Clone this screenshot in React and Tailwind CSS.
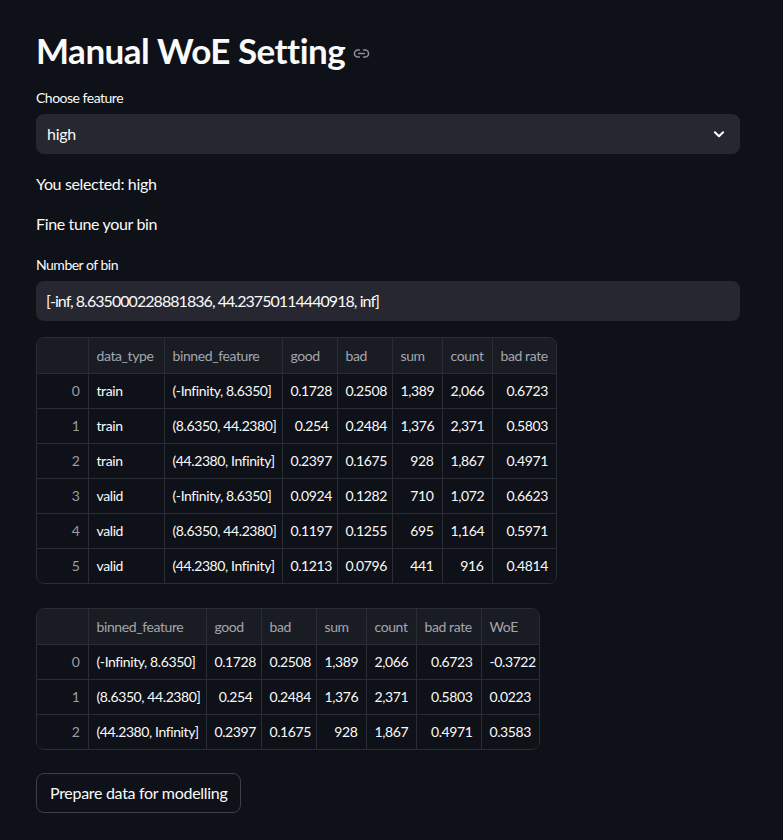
import React from "react";

const font = { fontFamily: "Lato, 'Noto Sans', sans-serif" };

const t1cols = [
  { h: "", w: 51 },
  { h: "data_type", w: 76, left: true },
  { h: "binned_feature", w: 118, left: true },
  { h: "good", w: 55 },
  { h: "bad", w: 55 },
  { h: "sum", w: 50 },
  { h: "count", w: 50 },
  { h: "bad rate", w: 64 },
];
const t1rows = [
  ["0", "train", "(-Infinity, 8.6350]", "0.1728", "0.2508", "1,389", "2,066", "0.6723"],
  ["1", "train", "(8.6350, 44.2380]", "0.254", "0.2484", "1,376", "2,371", "0.5803"],
  ["2", "train", "(44.2380, Infinity]", "0.2397", "0.1675", "928", "1,867", "0.4971"],
  ["3", "valid", "(-Infinity, 8.6350]", "0.0924", "0.1282", "710", "1,072", "0.6623"],
  ["4", "valid", "(8.6350, 44.2380]", "0.1197", "0.1255", "695", "1,164", "0.5971"],
  ["5", "valid", "(44.2380, Infinity]", "0.1213", "0.0796", "441", "916", "0.4814"],
];
const t2cols = [
  { h: "", w: 51 },
  { h: "binned_feature", w: 118, left: true },
  { h: "good", w: 55 },
  { h: "bad", w: 55 },
  { h: "sum", w: 50 },
  { h: "count", w: 50 },
  { h: "bad rate", w: 65 },
  { h: "WoE", w: 58 },
];
const t2rows = [
  ["0", "(-Infinity, 8.6350]", "0.1728", "0.2508", "1,389", "2,066", "0.6723", "-0.3722"],
  ["1", "(8.6350, 44.2380]", "0.254", "0.2484", "1,376", "2,371", "0.5803", "0.0223"],
  ["2", "(44.2380, Infinity]", "0.2397", "0.1675", "928", "1,867", "0.4971", "0.3583"],
];

function DataTable({ cols, rows }) {
  const total = cols.reduce((a, c) => a + c.w, 0);
  return (
    <div
      className="rounded-lg border border-[#2b2d36] overflow-hidden"
      style={{ width: total + 2 }}
    >
      <table className="border-collapse table-fixed text-[14px] tracking-[-0.4px]" style={{ width: total }}>
        <colgroup>
          {cols.map((c, i) => (
            <col key={i} style={{ width: c.w }} />
          ))}
        </colgroup>
        <thead>
          <tr className="h-[35px] bg-[#1a1c24]">
            {cols.map((c, i) => (
              <th
                key={i}
                className={`font-normal text-[#a3a6ae] px-2 text-left border-b border-[#2b2d36] ${i > 0 ? "border-l" : ""} whitespace-nowrap`}
              >
                {c.h}
              </th>
            ))}
          </tr>
        </thead>
        <tbody>
          {rows.map((r, ri) => (
            <tr key={ri} className="h-[35px] bg-[#0e1117]">
              {r.map((v, i) => (
                <td
                  key={i}
                  className={`px-2 whitespace-nowrap border-[#2b2d36] ${ri < rows.length - 1 ? "border-b" : ""} ${i > 0 ? "border-l" : ""} ${
                    i === 0
                      ? "text-right text-[#9a9da5]"
                      : cols[i].left
                      ? "text-left text-[#fafafa]"
                      : "text-right text-[#fafafa]"
                  }`}
                >
                  {v}
                </td>
              ))}
            </tr>
          ))}
        </tbody>
      </table>
    </div>
  );
}

export default function App() {
  return (
    <div className="min-h-[840px] bg-[#0e1117] text-[#fafafa]" style={font}>
      <div className="w-[704px] ml-[36px] pt-[28px]">
        <div className="flex items-center gap-[8px] h-[44px]">
          <h1 className="text-[35px] font-bold leading-none tracking-[-0.5px]">Manual WoE Setting</h1>
          <svg width="17" height="17" viewBox="0 0 24 24" fill="none" stroke="#8b8e96" strokeWidth="2.2" strokeLinecap="round" strokeLinejoin="round" className="mt-[6px]">
            <path d="M9 17H7A5 5 0 0 1 7 7h2" />
            <path d="M15 7h2a5 5 0 1 1 0 10h-2" />
            <line x1="8" y1="12" x2="16" y2="12" />
          </svg>
        </div>
        <div className="mt-[16px] text-[14px] leading-[20px] tracking-[-0.5px]">Choose feature</div>
        <div className="mt-[6px] h-[40px] rounded-lg bg-[#262730] flex items-center justify-between pl-[11px] pr-[14px] text-[16px] tracking-[-0.3px]">
          <span>high</span>
          <svg width="14" height="14" viewBox="0 0 24 24" fill="none" stroke="#fafafa" strokeWidth="3.5" strokeLinecap="round" strokeLinejoin="round">
            <path d="M5 9l7 7 7-7" />
          </svg>
        </div>
        <div className="mt-[18px] text-[16px] leading-[24px] tracking-[-0.35px]">You selected: high</div>
        <div className="mt-[16px] text-[16px] leading-[24px] tracking-[-0.35px]">Fine tune your bin</div>
        <div className="mt-[19px] text-[14px] leading-[20px] tracking-[-0.5px]">Number of bin</div>
        <div className="mt-[6px] h-[40px] rounded-lg bg-[#262730] flex items-center pl-[10px] text-[16px] tracking-[-0.95px]">
          [-inf, 8.635000228881836, 44.23750114440918, inf]
        </div>
        <div className="mt-[16px]">
          <DataTable cols={t1cols} rows={t1rows} />
        </div>
        <div className="mt-[24px]">
          <DataTable cols={t2cols} rows={t2rows} />
        </div>
        <div className="mt-[23px]">
          <button className="h-[40px] px-[13px] rounded-lg border border-[#3d3f48] bg-[#0e1117] text-[16px] tracking-[-0.3px] text-[#fafafa]">
            Prepare data for modelling
          </button>
        </div>
      </div>
    </div>
  );
}
